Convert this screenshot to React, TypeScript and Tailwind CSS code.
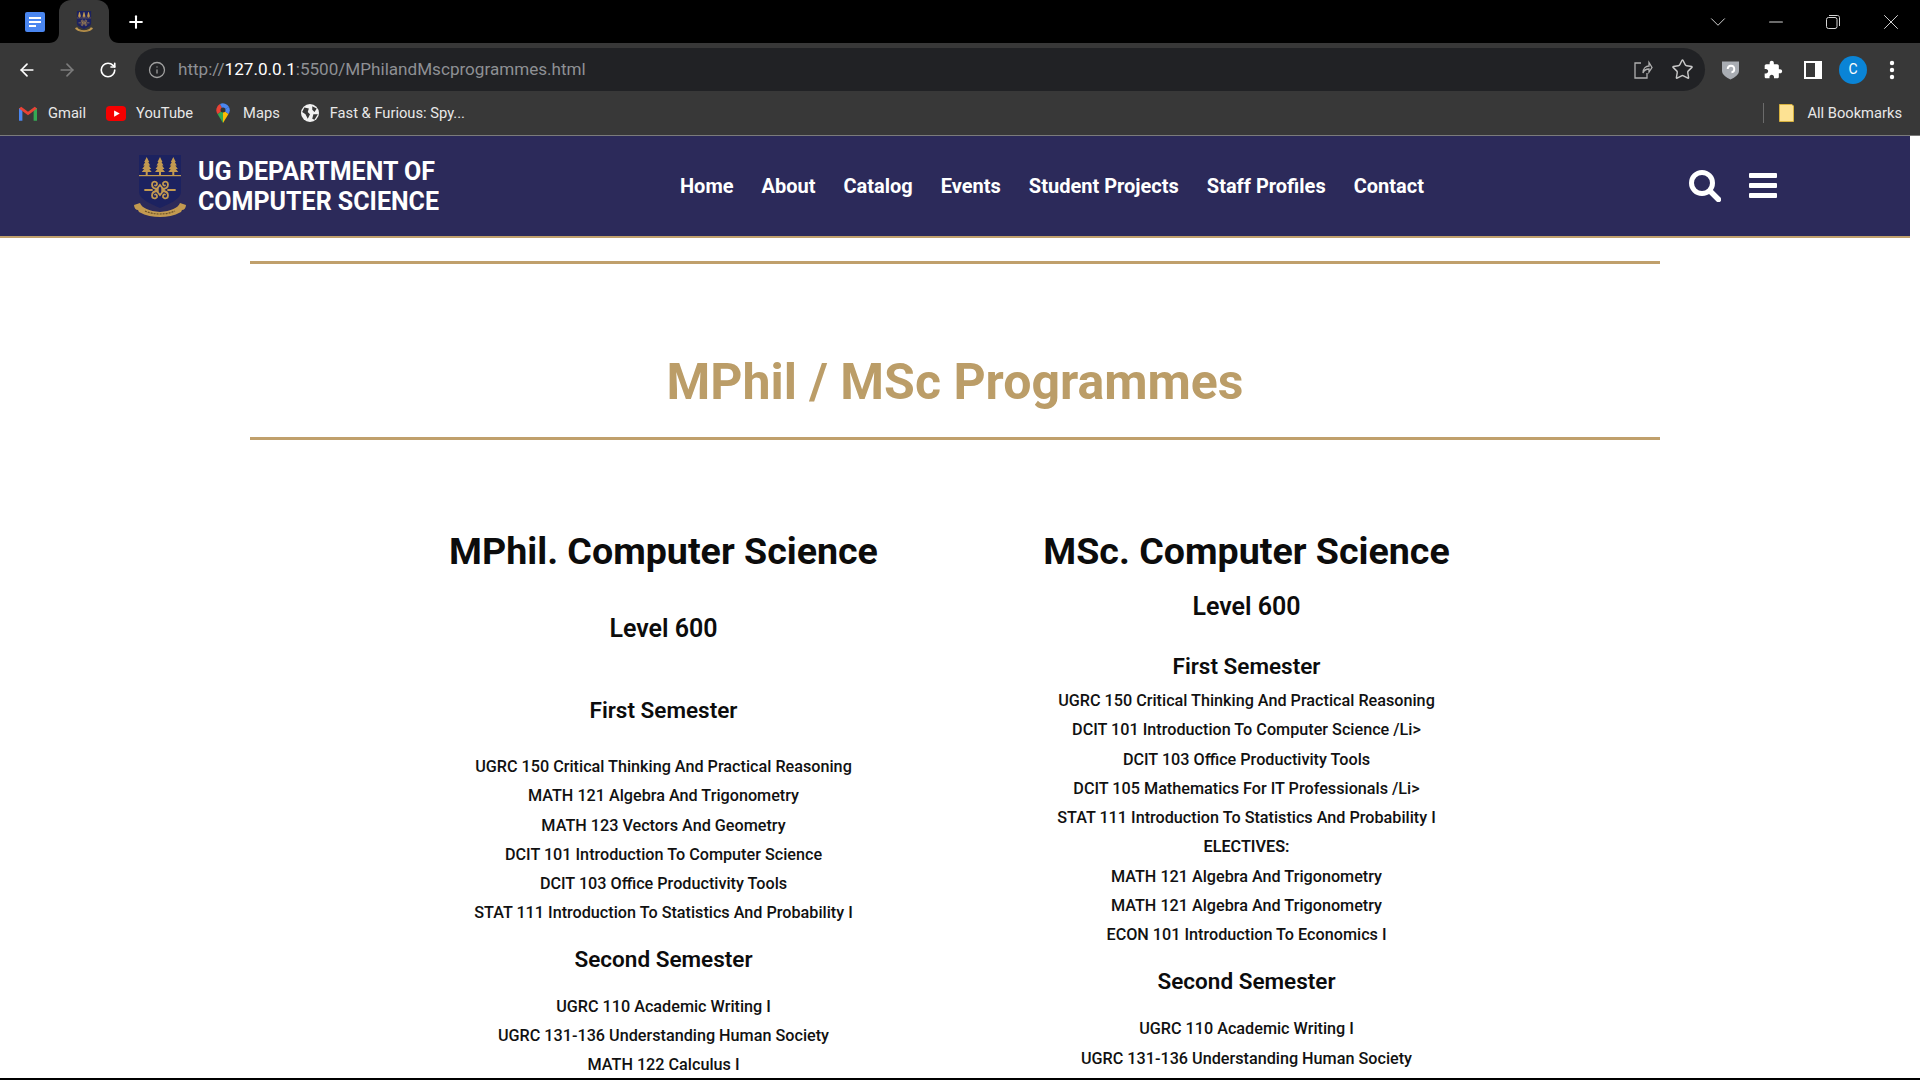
import React from 'react';
import { ArrowLeft, ArrowRight, RotateCw, Info, Star, Plus, ChevronDown, Minus, X } from 'lucide-react';

const Crest = ({ className }: { className?: string }) => (
    <svg viewBox="0 0 52 62" className={className}>
        <path d="M5 0H47V37C47 44 35 49 26 53C17 49 5 44 5 37Z" fill="#1c2260" />
        {[12.7, 26, 39.3].map((x) => (
            <path key={x} d="M-1 0V-3H-5L-2.5-6H-4.5L-2-9.5H-3.5L-1.5-13H-2.5L0-18 2.5-13H1.5L3.5-9.5H2L4.5-6H2.5L5-3H1V0Z" transform={`translate(${x} 20)`} fill="#c39a50" />
        ))}
        <rect x="5" y="20" width="42" height="1.2" fill="#c39a50" />
        <g fill="none" stroke="#c39a50" strokeWidth="1.8" strokeLinecap="round">
            <path d="M24 34C20 34 18 32 18 29.5C18 27 20 26 22 27C24 28 23 31 21 30.5" />
            <path d="M28 34C32 34 34 32 34 29.5C34 27 32 26 30 27C28 28 29 31 31 30.5" />
            <path d="M24 36C20 36 18 38 18 40.5C18 43 20 44 22 43C24 42 23 39 21 39.5" />
            <path d="M28 36C32 36 34 38 34 40.5C34 43 32 44 30 43C28 42 29 39 31 39.5" />
            <path d="M26 30L30 35 26 40 22 35Z" />
            <path d="M11 35H18M34 35H41" />
        </g>
        <path d="M0 50L6 48C8 53 15 56 26 57C37 56 44 53 46 48L52 50C52 53 50 55 48 55L47 57C40 61 33 62 26 62C19 62 12 61 5 57L4 55C2 55 0 53 0 50Z" fill="#c39a50" />
        <path d="M11 56C20 60 32 60 41 56" stroke="#6b5228" strokeWidth="1.2" strokeDasharray="2 1" fill="none" />
    </svg>
);

const CourseList = ({ items }: { items: string[] }) => (
    <ul className="flex flex-col">
        {items.map((item, i) => (
            <li key={i} className={`h-[29.25px] leading-[29.25px] text-[16.2px] text-[#111] ${item === 'ELECTIVES:' ? 'font-semibold' : 'font-medium'}`}>{item}</li>
        ))}
    </ul>
);

const nav = ['Home', 'About', 'Catalog', 'Events', 'Student Projects', 'Staff Profiles', 'Contact'];

export default function App() {
    return (
        <div className="h-screen w-full flex flex-col overflow-hidden bg-white font-['Roboto',sans-serif]">
            {/* Tab strip */}
            <div className="h-[43px] shrink-0 bg-black flex items-center text-white">
                <div className="w-[59px] flex justify-end pr-[14px]">
                    <svg viewBox="0 0 20 20" className="w-[20px] h-[20px]">
                        <rect width="20" height="20" rx="2" fill="#4a86f0" />
                        <path d="M4 5H16V7H4ZM4 9H16V11H4ZM4 13H11V15H4Z" fill="#fff" />
                    </svg>
                </div>
                <div className="relative w-[50px] h-[43px] bg-[#383838] rounded-t-[12px] flex items-center justify-center">
                    <svg viewBox="0 0 10 10" className="absolute bottom-0 left-[-10px] w-[10px] h-[10px]">
                        <path d="M10 0V10H0C6 10 10 6 10 0Z" fill="#383838" />
                    </svg>
                    <svg viewBox="0 0 10 10" className="absolute bottom-0 right-[-10px] w-[10px] h-[10px]">
                        <path d="M0 0V10H10C4 10 0 6 0 0Z" fill="#383838" />
                    </svg>
                    <Crest className="w-[18px] h-[21px]" />
                </div>
                <Plus size={20} strokeWidth={2.5} className="ml-[17px]" />
                <div className="ml-auto flex items-center text-[#d6d6d6]">
                    <div className="w-[57.5px] flex justify-center"><ChevronDown size={26} strokeWidth={0.9} /></div>
                    <div className="w-[57.5px] flex justify-center"><Minus size={22} strokeWidth={1.1} /></div>
                    <div className="w-[57.5px] flex justify-center">
                        <svg viewBox="0 0 14 14" className="w-[14px] h-[14px]" fill="none" stroke="#d6d6d6">
                            <rect x="0.5" y="2.5" width="10.5" height="11" rx="2" />
                            <path d="M3 0.5H11.5C12.6 0.5 13.5 1.4 13.5 2.5V11" />
                        </svg>
                    </div>
                    <div className="w-[58px] flex justify-center"><X size={26} strokeWidth={0.9} /></div>
                </div>
            </div>

            {/* Toolbar */}
            <div className="h-[48px] shrink-0 bg-[#383838] flex items-center pt-[5px] text-white">
                <ArrowLeft size={20} strokeWidth={2} className="ml-[17px]" />
                <ArrowRight size={20} strokeWidth={2} className="ml-[20px] text-[#7c7c7c]" />
                <RotateCw size={18} strokeWidth={2.2} className="ml-[22px]" />
                <div className="ml-[18px] w-[1570px] h-[43px] rounded-full bg-[#212225] flex items-center pl-[13px] pr-[11px]">
                    <Info size={18} strokeWidth={1.7} className="text-[#a0a0a0]" />
                    <span className="ml-[12px] text-[17.1px] text-[#8e9094]">
                        http://<span className="text-white">127.0.0.1</span>:5500/MPhilandMscprogrammes.html
                    </span>
                    <svg viewBox="0 0 20 20" className="ml-auto w-[20px] h-[20px]" fill="none" stroke="#b0b0b0" strokeWidth="1.3">
                        <path d="M8 3H2V18H14V13" />
                        <path d="M10 13C10 8 13 6 16 6V2.5L19 7.5 16 12V9C13 9 11 10 10 13Z" />
                    </svg>
                    <Star size={23} strokeWidth={1.5} className="ml-[18px] text-[#c8c8c8]" />
                </div>
                <svg viewBox="0 0 18 20" className="ml-[17px] w-[17px] h-[20px]">
                    <path d="M0 1H18V11C18 15 13 18 9 20C5 18 0 15 0 11Z" fill="#a9adb3" />
                    <path d="M6 9A3.5 3.5 0 1 1 10 12.5" fill="none" stroke="#fff" strokeWidth="2" />
                </svg>
                <svg viewBox="0 0 24 24" className="ml-[24px] w-[20px] h-[20px]" fill="#fff">
                    <path d="M20.5 11H19V7c0-1.1-.9-2-2-2h-4V3.5C13 2.12 11.88 1 10.5 1S8 2.12 8 3.5V5H4c-1.1 0-1.99.9-1.99 2v3.8H3.5c1.49 0 2.7 1.21 2.7 2.7s-1.21 2.7-2.7 2.7H2V20c0 1.1.9 2 2 2h3.8v-1.5c0-1.49 1.21-2.7 2.7-2.7 1.49 0 2.7 1.21 2.7 2.7V22H17c1.1 0 2-.9 2-2v-4h1.5c1.38 0 2.5-1.12 2.5-2.5S21.88 11 20.5 11z" />
                </svg>
                <svg viewBox="0 0 18 18" className="ml-[21px] w-[18px] h-[18px]">
                    <rect width="18" height="18" fill="#fff" />
                    <rect x="2" y="2" width="9" height="14" fill="#383838" />
                </svg>
                <div className="ml-[17px] w-[28px] h-[28px] rounded-full bg-[#0a84d6] text-[14px] flex items-center justify-center">C</div>
                <svg viewBox="0 0 6 20" className="ml-[22px] w-[6px] h-[20px]" fill="#fff">
                    <circle cx="3" cy="3" r="2.2" />
                    <circle cx="3" cy="10" r="2.2" />
                    <circle cx="3" cy="17" r="2.2" />
                </svg>
            </div>

            {/* Bookmarks */}
            <div className="h-[45px] shrink-0 bg-[#383838] border-b border-[#7b7b7b] flex items-center pl-[19px] pr-[18px] text-[14.7px] text-[#e8e8e8]">
                <svg viewBox="0 0 16 13" className="w-[18px] h-[15px]">
                    <path d="M0 13V1.5L3 2V13Z" fill="#4a86f0" />
                    <path d="M13 13V2L16 1.5V13Z" fill="#34a853" />
                    <path d="M0 2L8 8 16 2 14 0.5 8 5 2 0.5Z" fill="#e94235" />
                </svg>
                <span className="ml-[11px]">Gmail</span>
                <svg viewBox="0 0 16 12" className="ml-[20px] w-[20px] h-[15px]">
                    <rect width="16" height="12" rx="3" fill="#f60000" />
                    <path d="M6.5 3.5L11 6 6.5 8.5Z" fill="#fff" />
                </svg>
                <span className="ml-[10px]">YouTube</span>
                <svg viewBox="0 0 14 20" className="ml-[23px] w-[14px] h-[20px]">
                    <path d="M7 20L1.5 11 7 7Z" fill="#34a853" />
                    <path d="M7 20L12.5 11 7 7Z" fill="#fbbc04" />
                    <path d="M1.5 11A7 7 0 0 1 4 1L7 7Z" fill="#e94235" />
                    <path d="M4 1A7 7 0 0 1 13 4L7 7Z" fill="#4a86f0" />
                    <path d="M13 4A7 7 0 0 1 12.5 11L7 7Z" fill="#4a86f0" />
                    <circle cx="7" cy="7" r="2.5" fill="#333" />
                </svg>
                <span className="ml-[13px]">Maps</span>
                <svg viewBox="0 0 16 16" className="ml-[21px] w-[18px] h-[18px]">
                    <circle cx="8" cy="8" r="8" fill="#f2f2f2" />
                    <path d="M3 3L7 4 6 7 8 9 6 13 4 9 1 7ZM10 2L14 4 12 7 10 5ZM11 9L15 9 12 14 10 13Z" fill="#383838" />
                </svg>
                <span className="ml-[11px]">Fast &amp; Furious: Spy...</span>
                <div className="ml-auto w-px h-[20px] bg-[#6b6b6b] mr-[15px]" />
                <svg viewBox="0 0 15 18" className="w-[15px] h-[18px] mr-[13px]">
                    <path d="M0.5 0.5H13L14.5 2V17.5H0.5Z" fill="#fde293" stroke="#d7b23f" />
                </svg>
                <span>All Bookmarks</span>
            </div>

            {/* Site header */}
            <header className="h-[102px] shrink-0 w-[1910px] bg-[#2c2a5a] border-b-[2px] border-[#c0a06c] flex items-center pl-[134px] pr-[133px] text-white">
                <Crest className="w-[52px] h-[62px]" />
                <div className="ml-[12px] mt-[2px] text-[25px] leading-[30px] font-bold w-[260px]">
                    UG DEPARTMENT OF<br />COMPUTER SCIENCE
                </div>
                <nav className="ml-[222px] flex items-center gap-[28px] text-[20px] font-bold">
                    {nav.map((n) => (
                        <span key={n}>{n}</span>
                    ))}
                </nav>
                <svg viewBox="0 0 32 32" className="ml-auto w-[32px] h-[32px]" fill="none" stroke="#fff">
                    <circle cx="13" cy="13" r="10.5" strokeWidth="5" />
                    <path d="M21 21L29.5 29.5" strokeWidth="5.5" strokeLinecap="round" />
                </svg>
                <div className="ml-[28px] w-[28px] flex flex-col gap-[5px] mb-[1px]">
                    <div className="h-[5px] bg-white rounded-[1px]" />
                    <div className="h-[5px] bg-white rounded-[1px]" />
                    <div className="h-[5px] bg-white rounded-[1px]" />
                </div>
            </header>

            {/* Page body */}
            <main className="flex-1 min-h-0 overflow-hidden w-[1910px] text-center">
                <div className="mx-[250px] mt-[23px] h-[3px] bg-[#c0a06c]" />
                <h1 className="mx-[250px] box-content h-[83px] pt-[90px] text-[50px] leading-[56px] font-bold text-[#bb9d68] border-b-[3px] border-[#c0a06c]">
                    MPhil / MSc Programmes
                </h1>

                <div className="mt-[86px] ml-[372px] flex text-[#0c0c0c]">
                    <section className="w-[583px]">
                        <h2 className="text-[37.6px] leading-[50px] font-bold">MPhil. Computer Science</h2>
                        <h3 className="mt-[38px] text-[25px] leading-[30px] font-semibold">Level 600</h3>
                        <h4 className="mt-[51px] text-[22.5px] leading-[30px] font-semibold">First Semester</h4>
                        <div className="mt-[27px]">
                            <CourseList
                                items={[
                                    'UGRC 150 Critical Thinking And Practical Reasoning',
                                    'MATH 121 Algebra And Trigonometry',
                                    'MATH 123 Vectors And Geometry',
                                    'DCIT 101 Introduction To Computer Science',
                                    'DCIT 103 Office Productivity Tools',
                                    'STAT 111 Introduction To Statistics And Probability I',
                                ]}
                            />
                        </div>
                        <h4 className="mt-[16px] text-[22.5px] leading-[30px] font-semibold">Second Semester</h4>
                        <div className="mt-[18px]">
                            <CourseList
                                items={[
                                    'UGRC 110 Academic Writing I',
                                    'UGRC 131-136 Understanding Human Society',
                                    'MATH 122 Calculus I',
                                ]}
                            />
                        </div>
                    </section>
                    <section className="w-[583px]">
                        <h2 className="text-[37.6px] leading-[50px] font-bold">MSc. Computer Science</h2>
                        <h3 className="mt-[16px] text-[25px] leading-[30px] font-semibold">Level 600</h3>
                        <h4 className="mt-[29px] text-[22.5px] leading-[30px] font-semibold">First Semester</h4>
                        <div className="mt-[5px]">
                            <CourseList
                                items={[
                                    'UGRC 150 Critical Thinking And Practical Reasoning',
                                    'DCIT 101 Introduction To Computer Science /Li>',
                                    'DCIT 103 Office Productivity Tools',
                                    'DCIT 105 Mathematics For IT Professionals /Li>',
                                    'STAT 111 Introduction To Statistics And Probability I',
                                    'ELECTIVES:',
                                    'MATH 121 Algebra And Trigonometry',
                                    'MATH 121 Algebra And Trigonometry',
                                    'ECON 101 Introduction To Economics I',
                                ]}
                            />
                        </div>
                        <h4 className="mt-[17px] text-[22.5px] leading-[30px] font-semibold">Second Semester</h4>
                        <div className="mt-[18px]">
                            <CourseList
                                items={[
                                    'UGRC 110 Academic Writing I',
                                    'UGRC 131-136 Understanding Human Society',
                                ]}
                            />
                        </div>
                    </section>
                </div>
            </main>
            <div className="h-[2px] shrink-0 bg-black" />
        </div>
    );
}
